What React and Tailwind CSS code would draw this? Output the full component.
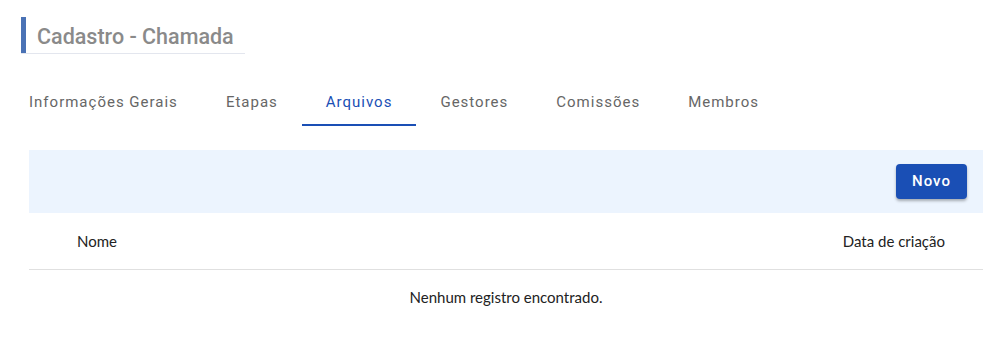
export default function App() {
  const tabs = ["Informações Gerais", "Etapas", "Arquivos", "Gestores", "Comissões", "Membros"];
  return (
    <div className="w-[989px] h-[361px] bg-white overflow-hidden" style={{ fontFamily: "Roboto, sans-serif" }}>
      <div className="flex pl-[21px] pt-[17px]">
        <div className="flex h-[37px] border-b border-[#e3e6ee]">
          <div className="w-[5px] bg-[#4a72b5]" />
          <div className="pl-[11px] pr-[11px] text-[21.5px] leading-[37px] font-medium text-[#8a8a8a] pt-[1px]">
            Cadastro - Chamada
          </div>
        </div>
      </div>
      <div className="flex pl-[5px] mt-[26px]">
        {tabs.map((t) => (
          <div
            key={t}
            className={
              "px-6 h-[46px] flex items-center text-[15px] tracking-[1px] " +
              (t === "Arquivos" ? "text-[#1a4fb5] border-b-2 border-[#1a4fb5]" : "text-[#666] border-b-2 border-transparent")
            }
          >
            {t}
          </div>
        ))}
      </div>
      <div className="mx-[29px] w-[954px] mt-[24px]">
        <div className="h-[63px] bg-[#ecf4fe] flex items-center justify-end pr-[16px]">
          <button className="h-[35px] w-[71px] rounded-[4px] bg-[#1a4fb5] text-white font-medium text-[15px] tracking-[1px] shadow-[0_2px_3px_rgba(0,0,0,0.3)]">
            Novo
          </button>
        </div>
        <div className="h-[57px] flex items-center justify-between border-b border-[#e0e0e0] text-[15px] text-[#222]" style={{ fontFamily: "Lato, sans-serif" }}>
          <div className="pl-[48px]">Nome</div>
          <div className="pr-[38px]">Data de criação</div>
        </div>
        <div className="h-[55px] flex items-center justify-center text-[15px] text-[#222]" style={{ fontFamily: "Lato, sans-serif" }}>
          Nenhum registro encontrado.
        </div>
      </div>
    </div>
  );
}
